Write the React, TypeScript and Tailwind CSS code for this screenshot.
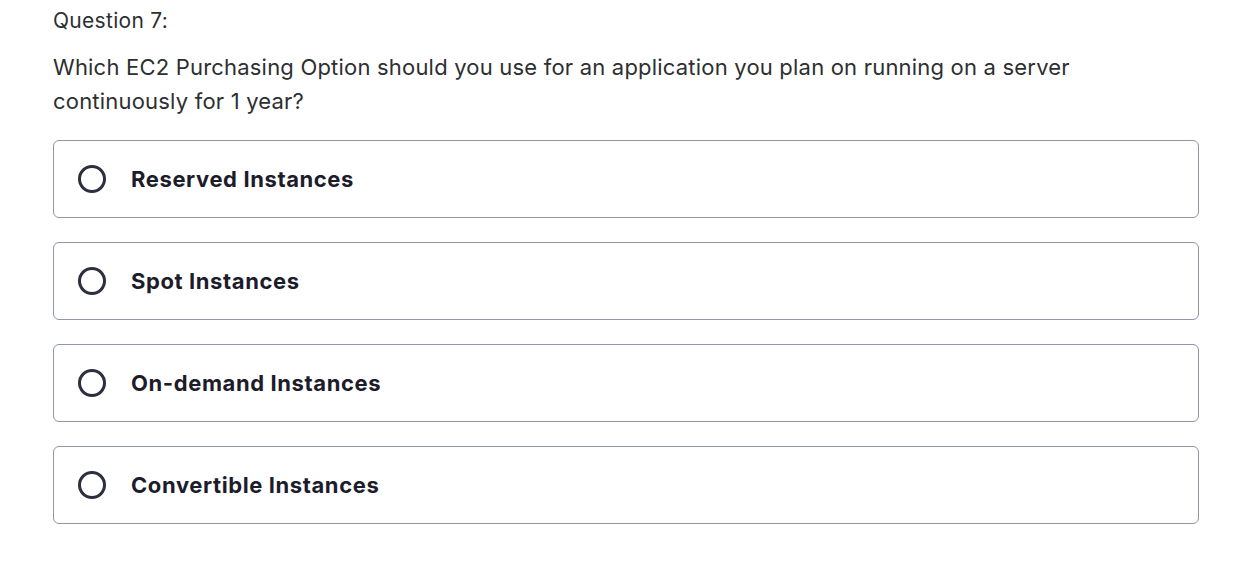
import React from "react";

const options = [
  "Reserved Instances",
  "Spot Instances",
  "On-demand Instances",
  "Convertible Instances",
];

export default function App() {
  return (
    <div
      className="min-h-[581px] w-[1240px] bg-white text-[#2d2f31]"
      style={{ fontFamily: "Inter, 'Noto Sans', sans-serif" }}
    >
      <div className="ml-[53px] w-[1146px] pt-[6px]">
        <div className="text-[21px] leading-[30px] tracking-[0.3px]">Question 7:</div>
        <div className="mt-[14px] text-[22px] leading-[34px] tracking-[0.2px] pr-[100px]">
          Which EC2 Purchasing Option should you use for an application you plan on running on a server continuously for 1 year?
        </div>
        <div className="mt-[22px] flex flex-col gap-[24px]">
          {options.map((o) => (
            <div
              key={o}
              className="flex h-[78px] items-center rounded-[6px] border border-[#9194ac] pl-[24px]"
            >
              <div className="h-[28px] w-[28px] rounded-full border-[3px] border-[#2d2f3f]" />
              <div className="ml-[25px] text-[22px] font-bold tracking-[0.6px] text-[#1d1c2b]">{o}</div>
            </div>
          ))}
        </div>
      </div>
    </div>
  );
}
